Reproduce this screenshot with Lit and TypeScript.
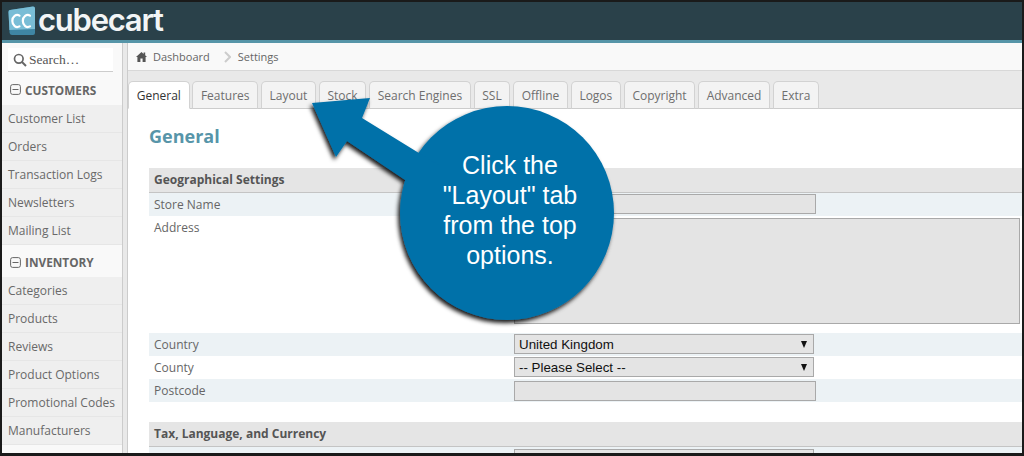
import { LitElement, html, css, svg } from "lit";
import { customElement } from "lit/decorators.js";

const tabs = ["General","Features","Layout","Stock","Search Engines","SSL","Offline","Logos","Copyright","Advanced","Extra"];
const groups = [
  { title: "CUSTOMERS", items: ["Customer List","Orders","Transaction Logs","Newsletters","Mailing List"] },
  { title: "INVENTORY", items: ["Categories","Products","Reviews","Product Options","Promotional Codes","Manufacturers"] },
];

@customElement("app-root")
export class AppRoot extends LitElement {
  static styles = css`
    :host { display: block; width: 1024px; height: 456px; overflow: hidden; position: relative; font-family: "Open Sans", sans-serif; }
    * { box-sizing: border-box; }
    .frame { width: 1024px; height: 456px; border: 2px solid #1a1a1a; border-bottom-width: 3px; display: flex; flex-direction: column; overflow: hidden; background: #fff; }
    header { height: 38px; background: #2a414a; flex: none; display: flex; align-items: center; gap: 2px; padding-left: 6px; }
    .wordmark { font-family: "Inter", sans-serif; font-size: 31px; font-weight: 600; color: #f2f5f6; letter-spacing: -1.25px; line-height: 38px; margin-top: -2px; }
    .stripe { height: 3px; background: #5695a8; flex: none; }
    .body { display: flex; flex: 1; min-height: 0; }
    aside { width: 121px; flex: none; background: #f9f9f9; border-right: 1px solid #ccc; overflow: hidden; padding-top: 5px; }
    .search { margin-left: 6px; width: 105px; height: 24px; background: #fff; border-bottom: 1px solid #ccc; display: flex; align-items: center; gap: 2px; padding-left: 5px; font-family: "Liberation Serif", serif; font-size: 13.5px; color: #555; }
    .ghead { height: 31px; display: flex; align-items: center; gap: 4px; padding-left: 8px; font-size: 11.8px; font-weight: 700; color: #666; margin-top: 2px; }
    .group + .group .ghead { margin-top: 0; height: 32px; padding-top: 2px; }
    .item { height: 28px; background: #efefef; border-bottom: 1px solid #e6e6e6; padding-left: 6px; font-size: 12px; line-height: 28px; color: #696969; white-space: nowrap; }
    .gutter { width: 5px; flex: none; background: #e9e9e9; border-right: 1px solid #ccc; }
    main { flex: 1; min-width: 0; display: flex; flex-direction: column; }
    .crumbs { height: 28px; flex: none; background: #f9f9f9; border-bottom: 1px solid #d8d8d8; display: flex; align-items: center; padding-left: 8px; font-size: 11px; color: #666; }
    .crumbs .home { margin-right: 6px; }
    .crumbs .sep { margin: 0 7px 0 14px; }
    .tabbar { height: 38px; flex: none; background: #e9e9e9; border-bottom: 1px solid #ccc; display: flex; align-items: flex-end; gap: 2.7px; padding-left: 0; }
    .tab { height: 28px; margin-bottom: -1px; border: 1px solid #d2d2d2; border-bottom-color: #ccc; border-radius: 5px 5px 0 0; background: #f3f3f3; padding: 0 7.7px; font-size: 12px; line-height: 28px; color: #6e6e6e; white-space: nowrap; }
    .tab.active { background: #fff; color: #333; border-bottom-color: #fff; z-index: 1; }
    .content { flex: 1; min-height: 0; overflow: hidden; padding: 14px 0 0 21px; }
    h1 { margin: 0 0 18px; font-size: 18px; line-height: 27px; font-weight: 700; color: #5795a9; }
    .th { height: 25px; background: #e5e5e5; border-bottom: 1px solid #c4c4c4; padding-left: 5px; font-size: 12px; font-weight: 700; line-height: 24px; color: #555; }
    .row { display: flex; height: 23px; font-size: 12px; line-height: 23px; color: #666; padding-left: 5px; align-items: flex-start; }
    .row.alt { background: #ecf2f5; }
    .row.tall { height: 117px; }
    .row .lab { width: 360px; flex: none; }
    .ctl { background: #e4e4e4; border: 1px solid #a9a9a9; font-family: "Liberation Sans", sans-serif; font-size: 13.33px; color: #111; margin-top: 1px; }
    .inp { width: 302px; height: 20px; }
    .low { margin-top: 2px; }
    .area { width: 506px; height: 106px; margin-top: 2px; }
    .sel { width: 300px; height: 20px; display: flex; align-items: center; justify-content: space-between; padding: 1px 6px 0 4px; line-height: 18px; }
    .arrow { width: 0; height: 0; border-left: 3.5px solid transparent; border-right: 3.5px solid transparent; border-top: 7px solid #111; }
    .spacer { height: 20px; }
    .overlay { position: absolute; left: 0; top: 0; width: 1024px; height: 456px; pointer-events: none; }
    .callout { position: absolute; left: 404px; top: 150px; width: 212px; text-align: center; font-family: "Liberation Sans", sans-serif; font-size: 25px; line-height: 30px; color: #fff; }
  `;

  render() {
    return html`
      <div class="frame">
        <header>
          <svg width="28" height="30" viewBox="0 0 28 30">
            <path d="M2 4 L25 0.5 Q27 0.5 27 2.5 L27 27 Q27 29 25 29 L4 29 Q2 29 1.6 27 L0.5 6 Q0.5 4 2 4 Z" fill="#3f86a4"/>
            <path d="M2 4 L25 0.5 Q27 0.5 27 2.5 L27 23 L1.4 24 L0.5 6 Q0.5 4 2 4 Z" fill="#79bdd6"/>
            <path d="M11.5 9.6 A5 6 0 1 0 11.5 20.4 M22 9.6 A5 6 0 1 0 22 20.4" fill="none" stroke="#fff" stroke-width="2.2" stroke-linecap="round"/>
          </svg>
          <span class="wordmark">cubecart</span>
        </header>
        <div class="stripe"></div>
        <div class="body">
          <aside>
            <div class="search">
              <svg width="14" height="14" viewBox="0 0 14 14"><circle cx="5.8" cy="5.8" r="4.3" fill="none" stroke="#666" stroke-width="1.7"/><path d="M9 9 L13 13" stroke="#666" stroke-width="2"/></svg>
              <span>Search…</span>
            </div>
            ${groups.map(g => html`
              <div class="group">
                <div class="ghead">
                  <svg width="11" height="11" viewBox="0 0 11 11"><rect x=".6" y=".6" width="9.8" height="9.8" rx="2" fill="none" stroke="#666" stroke-width="1"/><path d="M2.5 5.5 H8.5" stroke="#666" stroke-width="1"/></svg>
                  <span>${g.title}</span>
                </div>
                ${g.items.map(i => html`<div class="item">${i}</div>`)}
              </div>`)}
          </aside>
          <div class="gutter"></div>
          <main>
            <div class="crumbs">
              <svg class="home" width="11" height="10" viewBox="0 0 11 10"><path d="M5.5 0 L7.6 1.9 L7.6 .6 L9.2 .6 L9.2 3.3 L11 5 L9.6 5 L9.6 10 L6.6 10 L6.6 6.5 L4.4 6.5 L4.4 10 L1.4 10 L1.4 5 L0 5 Z" fill="#555"/></svg>
              <span>Dashboard</span>
              <svg class="sep" width="7" height="12" viewBox="0 0 7 12"><path d="M1 1 L6 6 L1 11" fill="none" stroke="#ccc" stroke-width="2"/></svg>
              <span>Settings</span>
            </div>
            <div class="tabbar">
              ${tabs.map((t, i) => html`<div class="tab ${i === 0 ? "active" : ""}">${t}</div>`)}
            </div>
            <div class="content">
              <h1>General</h1>
              <div class="th">Geographical Settings</div>
              <div class="row alt"><span class="lab">Store Name</span><div class="ctl inp"></div></div>
              <div class="row tall"><span class="lab">Address</span><div class="ctl area"></div></div>
              <div class="row alt"><span class="lab">Country</span><div class="ctl sel"><span>United Kingdom</span><i class="arrow"></i></div></div>
              <div class="row"><span class="lab">County</span><div class="ctl sel"><span>-- Please Select --</span><i class="arrow"></i></div></div>
              <div class="row alt"><span class="lab">Postcode</span><div class="ctl inp low"></div></div>
              <div class="spacer"></div>
              <div class="th">Tax, Language, and Currency</div>
              <div class="row alt"><span class="lab">Default</span><div class="ctl sel low"><span>English (UK)</span><i class="arrow"></i></div></div>
            </div>
          </main>
        </div>
      </div>
      <svg class="overlay" viewBox="0 0 1024 456">
        <defs>
          <filter id="sh" x="-20%" y="-20%" width="140%" height="140%">
            <feDropShadow dx="-2" dy="3" stdDeviation="2" flood-color="#000" flood-opacity=".9"/>
          </filter>
        </defs>
        ${svg`<g filter="url(#sh)" fill="#0071a9"><circle cx="507" cy="213" r="107"/><path d="M312 103 L370 98 L362 118 L440 166 L420 190 L347 141 L336 157 Z"/></g>`}
      </svg>
      <div class="callout">Click the<br>"Layout" tab<br>from the top<br>options.</div>
    `;
  }
}
